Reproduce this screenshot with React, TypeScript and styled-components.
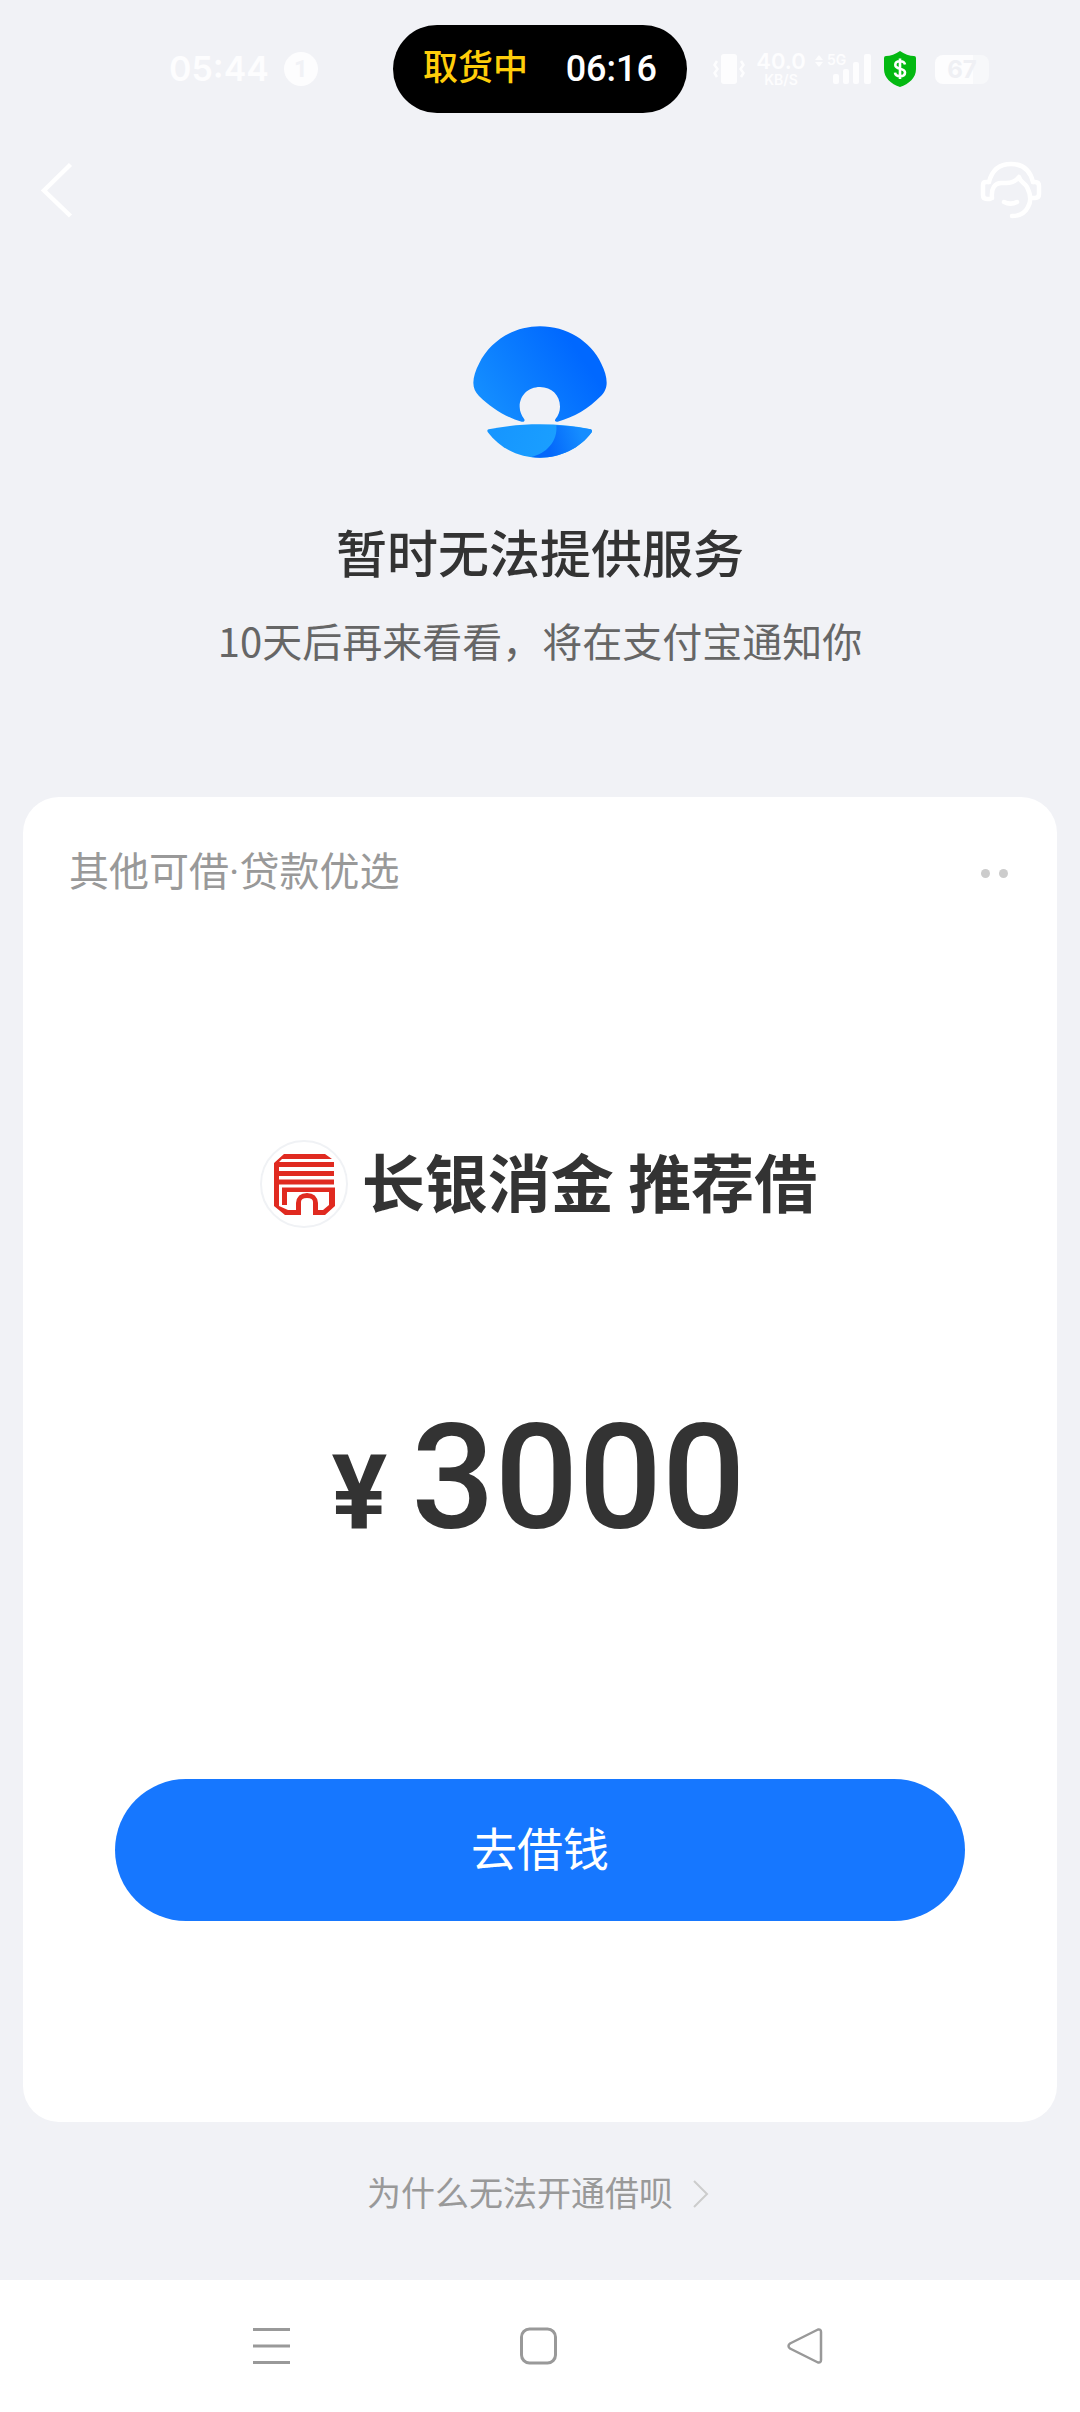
import React from "react";
import styled, { createGlobalStyle } from "styled-components";

const GlobalStyle = createGlobalStyle`
  *, *::before, *::after { box-sizing: border-box; }
  body {
    margin: 0;
    background: #f1f2f6;
    font-family: Roboto, "Noto Sans CJK SC", sans-serif;
    color: #333;
  }
  button { padding: 0; border: 0; background: none; font: inherit; color: inherit; cursor: pointer; }
  svg { display: block; }
`;

const Page = styled.div`
  display: flex;
  flex-direction: column;
  min-height: 100vh;
`;

const StatusBar = styled.header`
  display: grid;
  grid-template-columns: 1fr auto 1fr;
  align-items: center;
  height: 138px;
  color: #fdfdfe;
`;

const StatusLeft = styled.div`
  display: flex;
  align-items: center;
  gap: 15px;
  padding-left: 169px;
`;

const Clock = styled.time`
  font-family: Inter, sans-serif;
  font-size: 34px;
  line-height: 40px;
  font-weight: 600;
`;

const Notice = styled.span`
  display: flex;
  align-items: center;
  justify-content: center;
  width: 34px;
  height: 34px;
  border-radius: 50%;
  background: #fdfdfe;
  color: #f1f2f6;
  font-size: 24px;
  font-weight: 700;
`;

const Island = styled.div`
  display: flex;
  align-items: center;
  justify-content: space-between;
  width: 294px;
  height: 88px;
  padding: 0 30px;
  border-radius: 44px;
  background: #000;
  color: #fff;
  font-size: 36px;
  line-height: 48px;
  font-weight: 500;
`;

const IslandLabel = styled.span`
  color: #ffce0a;
  font-size: 35px;
`;

const StatusRight = styled.div`
  display: flex;
  align-items: center;
  padding-left: 26px;
`;

const Speed = styled.div`
  display: flex;
  flex-direction: column;
  align-items: center;
  width: 52px;
  margin-left: 10px;
  font-family: Inter, sans-serif;
  font-weight: 600;
`;

const SpeedValue = styled.span`
  font-size: 22px;
  line-height: 22px;
`;

const SpeedUnit = styled.span`
  font-size: 14px;
  line-height: 16px;
`;

const Signal = styled.div`
  position: relative;
  margin-left: 8px;
`;

const Network = styled.span`
  position: absolute;
  top: 0;
  left: 12px;
  font-family: Inter, sans-serif;
  font-size: 14px;
  line-height: 14px;
  font-weight: 600;
`;

const Shield = styled.div`
  margin: 0 18px 0 12px;
`;

const Battery = styled.div`
  display: flex;
  align-items: center;
  justify-content: center;
  width: 54px;
  height: 29px;
  border-radius: 8px;
  background: linear-gradient(90deg, #fdfdfe 70%, #f7f8fa 70%);
  color: #eff0f4;
  font-family: Inter, sans-serif;
  font-size: 24px;
  font-weight: 700;
`;

const TitleBar = styled.nav`
  display: flex;
  align-items: center;
  justify-content: space-between;
  height: 104px;
  padding: 0 38px 0 36px;
`;

const Hero = styled.section`
  display: flex;
  flex-direction: column;
  align-items: center;
  padding: 84px 24px 127px;
  text-align: center;
`;

const HeroTitle = styled.h1`
  margin: 63px 0 19px;
  font-size: 51px;
  line-height: 70px;
  font-weight: 500;
`;

const HeroText = styled.p`
  margin: 0;
  font-family: "Noto Sans CJK SC", sans-serif;
  font-size: 40px;
  line-height: 60px;
  color: #666;
`;

const Card = styled.section`
  display: flex;
  flex-direction: column;
  margin: 0 23px;
  padding: 46px 49px 201px 46px;
  border-radius: 36px;
  background: #fff;
`;

const CardHeader = styled.div`
  display: flex;
  align-items: center;
  justify-content: space-between;
`;

const CardTitle = styled.h2`
  margin: 0;
  font-size: 40px;
  line-height: 60px;
  font-weight: 400;
  color: #999;
`;

const MoreButton = styled.button`
  display: flex;
  gap: 9px;
`;

const Dot = styled.span`
  width: 9px;
  height: 9px;
  border-radius: 50%;
  background: #ccc;
`;

const Lender = styled.div`
  display: flex;
  align-items: center;
  justify-content: center;
  gap: 14px;
  height: 88px;
  margin-top: 237px;
`;

const LenderName = styled.h3`
  margin: 0;
  padding-bottom: 8px;
  font-family: "Noto Sans CJK SC", sans-serif;
  font-size: 63px;
  line-height: 80px;
  font-weight: 700;
`;

const Amount = styled.p`
  display: flex;
  align-items: baseline;
  justify-content: center;
  gap: 24px;
  margin: 176px 0 227px;
  font-size: 147px;
  line-height: 148px;
  font-weight: 500;
`;

const Currency = styled.span`
  font-size: 104px;
  line-height: 104px;
  font-weight: 700;
`;

const BorrowButton = styled.button`
  height: 142px;
  margin: 0 43px 0 46px;
  border-radius: 71px;
  background: #1677ff;
  color: #fff;
  font-size: 46px;
  line-height: 60px;
`;

const Help = styled.footer`
  display: flex;
  flex: 1;
  align-items: flex-start;
  justify-content: center;
  padding: 47px 28px 61px 24px;
`;

const HelpLink = styled.a`
  display: flex;
  align-items: center;
  gap: 20px;
  font-size: 34px;
  line-height: 50px;
  color: #999;
  text-decoration: none;
`;

const SystemNav = styled.nav`
  display: grid;
  grid-template-columns: repeat(3, 267px);
  justify-content: center;
  height: 132px;
  padding-right: 4px;
  background: #fff;
`;

const NavButton = styled.button`
  display: flex;
  align-items: center;
  justify-content: center;
`;

const VibrateIcon = () => (
  <svg width="32" height="32" viewBox="0 0 32 32" fill="none" stroke="#fdfdfe" strokeWidth="2.5">
    <rect x="8" y="1" width="16" height="30" rx="3" fill="#fdfdfe" stroke="none" />
    <path d="M4 8 1.5 12 4.5 16 1.5 20 4 24M28 8l2.500 4-3 4 3 4-2.500 4" />
  </svg>
);

const SignalIcon = () => (
  <svg width="56" height="32" viewBox="0 0 56 32" fill="#fdfdfe">
    <path d="M0 7 4 2l4 5zM0 9l4 5 4-5z" />
    <rect x="18" y="21" width="6" height="10" rx="2" />
    <rect x="28" y="16" width="6" height="15" rx="2" />
    <rect x="38" y="9" width="6" height="22" rx="2" />
    <rect x="49" y="1" width="7" height="30" rx="2" />
  </svg>
);

const ShieldIcon = () => (
  <svg width="34" height="36" viewBox="0 0 34 36">
    <path
      d="M17 0C21 3 27 5 31 5Q33 5 33 7V18C33 27 26 33 17 36C8 33 1 27 1 18V7Q1 5 3 5C7 5 13 3 17 0Z"
      fill="#04b912"
    />
    <path
      d="M22 13.5C21.5 11 19.5 10.300 17 10.300C14 10.300 12.300 11.800 12.300 14C12.300 19 22 16.500 22 21.500C22 24 20 25.300 17 25.300C14.300 25.300 12.300 24.200 12 21.700M17 7.500V28"
      fill="none"
      stroke="#fff"
      strokeWidth="2.600"
    />
  </svg>
);

const BackIcon = () => (
  <svg width="40" height="56" viewBox="0 0 40 56" fill="none" stroke="#fff" strokeWidth="4.500">
    <path d="M34.500 2.500 8 28.500 34.500 54" />
  </svg>
);

const HeadsetIcon = () => (
  <svg width="62" height="58" viewBox="0 0 62 58" fill="none" stroke="#fff" strokeWidth="4.500" strokeLinecap="round" strokeLinejoin="round">
    <path d="M9 21C12 9 20 3 31 3s19 6 22 18" />
    <path d="M9 21H6q-3 0-3 3v10q0 4 4 4h3M53 21h2q4 0 4 4v8q0 4-4 4h-3" />
    <path d="M12 37c-1-10 3-15 9-15h5c6 0 10-2 13-6 1 5 6 6 8 10 4 8 4 15 1 20-3 6-8 9-16 9" />
    <path d="M24 41c4 2 9 2 13 0" />
  </svg>
);

const ShellLogo = () => (
  <svg width="134" height="132" viewBox="100 76 402 396" role="img" aria-label="借呗">
    <defs>
      <linearGradient id="shell" x1="120" y1="320" x2="400" y2="130" gradientUnits="userSpaceOnUse">
        <stop offset="0" stopColor="#1590ff" />
        <stop offset="1" stopColor="#0068ff" />
      </linearGradient>
      <linearGradient id="base" x1="170" y1="390" x2="340" y2="460" gradientUnits="userSpaceOnUse">
        <stop offset="0" stopColor="#1696ff" />
        <stop offset="1" stopColor="#1a9fff" />
      </linearGradient>
      <linearGradient id="fold" x1="325" y1="430" x2="425" y2="400" gradientUnits="userSpaceOnUse">
        <stop offset="0" stopColor="#0468fb" />
        <stop offset="1" stopColor="#158dff" />
      </linearGradient>
    </defs>
    <path
      d="M301 77C380 77 452 120 485 189C495 209 501 228 501 246C501 263 494 276 483 287C448 323 402 351 354 363C347 365 343 360 348 354C356 344 361 332 361 318C361 284 336 259 301 259C266 259 240 284 240 318C240 332 246 344 253 354C257 360 254 365 246 363C199 350 153 321 118 286C107 274 101 262 101 246C101 228 108 208 118 189C152 120 223 77 301 77Z"
      fill="url(#shell)"
    />
    <path
      d="M147 386C196 376 246 371 301 371C355 371 406 376 453 386C457 387 458 391 456 395C420 444 363 471 301 471C238 471 181 444 144 394C142 390 143 387 147 386Z"
      fill="url(#base)"
    />
    <path
      d="M350 374C386 376 421 380 453 386C457 387 458 391 456 395C420 444 363 471 301 471Q287 471 275 469C318 460 355 423 350 374Z"
      fill="url(#fold)"
    />
  </svg>
);

const BankLogo = () => (
  <svg width="88" height="88" viewBox="0 0 88 88" role="img" aria-label="长银消金">
    <circle cx="44" cy="44" r="43" fill="#fff" stroke="#f0f2f5" strokeWidth="2" />
    <g fill="#e02a20">
      <path d="M24 14H65L72 19H22L19 22V66L28 70H41V75H25L14 66V23z" />
      <path d="M19 22H74V27H19zM19 31H74V36H19zM19 39.500H74V44.500H19z" />
      <path d="M22 47.500H75V66L65 75H53V62Q53 58 47 58T41 62V75H36V63Q37 53 47 53T58 63V70H63L69 65V52H27V65H22z" />
    </g>
  </svg>
);

const ChevronIcon = () => (
  <svg width="16" height="28" viewBox="0 0 16 28" fill="none" stroke="#ccc" strokeWidth="2">
    <path d="M1 1 14 14 1 27" />
  </svg>
);

const MenuIcon = () => (
  <svg width="37" height="38" viewBox="0 0 37 38" stroke="#999" strokeWidth="3">
    <path d="M0 2.500H37M0 19H37M0 35.500H37" />
  </svg>
);

const HomeIcon = () => (
  <svg width="37" height="38" viewBox="0 0 37 38" fill="none" stroke="#999" strokeWidth="3">
    <rect x="1.500" y="2" width="34" height="34" rx="8" />
  </svg>
);

const ReturnIcon = () => (
  <svg width="36" height="38" viewBox="0 0 36 38" fill="none" stroke="#999" strokeWidth="2.500" strokeLinejoin="round">
    <path d="M31 2.500 3 16.500Q0 19 3 21.500L31 35.500Q34 36 34 33V5Q34 2 31 2.500Z" />
  </svg>
);

export default function App() {
  return (
    <Page>
      <GlobalStyle />
      <StatusBar>
        <StatusLeft>
          <Clock>05:44</Clock>
          <Notice>1</Notice>
        </StatusLeft>
        <Island>
          <IslandLabel>取货中</IslandLabel>
          <span>06:16</span>
        </Island>
        <StatusRight>
          <VibrateIcon />
          <Speed>
            <SpeedValue>40.0</SpeedValue>
            <SpeedUnit>KB/S</SpeedUnit>
          </Speed>
          <Signal>
            <SignalIcon />
            <Network>5G</Network>
          </Signal>
          <Shield>
            <ShieldIcon />
          </Shield>
          <Battery>67</Battery>
        </StatusRight>
      </StatusBar>

      <TitleBar>
        <button type="button" aria-label="返回">
          <BackIcon />
        </button>
        <button type="button" aria-label="客服">
          <HeadsetIcon />
        </button>
      </TitleBar>

      <main>
        <Hero>
          <ShellLogo />
          <HeroTitle>暂时无法提供服务</HeroTitle>
          <HeroText>10天后再来看看，将在支付宝通知你</HeroText>
        </Hero>

        <Card>
          <CardHeader>
            <CardTitle>其他可借·贷款优选</CardTitle>
            <MoreButton type="button" aria-label="更多">
              <Dot />
              <Dot />
            </MoreButton>
          </CardHeader>
          <Lender>
            <BankLogo />
            <LenderName>长银消金 推荐借</LenderName>
          </Lender>
          <Amount>
            <Currency>¥</Currency>
            <span>3000</span>
          </Amount>
          <BorrowButton type="button">去借钱</BorrowButton>
        </Card>
      </main>

      <Help>
        <HelpLink href="#help">
          为什么无法开通借呗
          <ChevronIcon />
        </HelpLink>
      </Help>

      <SystemNav>
        <NavButton type="button" aria-label="最近任务">
          <MenuIcon />
        </NavButton>
        <NavButton type="button" aria-label="主屏幕">
          <HomeIcon />
        </NavButton>
        <NavButton type="button" aria-label="返回上一级">
          <ReturnIcon />
        </NavButton>
      </SystemNav>
    </Page>
  );
}
